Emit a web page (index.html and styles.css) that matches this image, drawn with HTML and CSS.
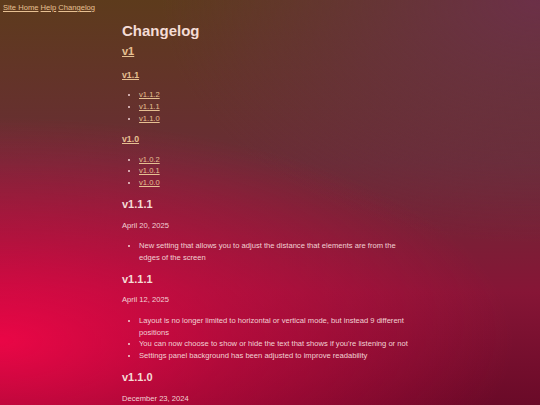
FILE: index.html
```html
<!DOCTYPE html>
<html lang="en">
<head>
<meta charset="utf-8">
<title>Changelog</title>
<link rel="stylesheet" href="styles.css">
</head>
<body>
<nav class="site-nav">
  <a href="#">Site Home</a> <a href="#">Help</a> <a href="#">Changelog</a>
</nav>
<main class="page">
  <h1 class="title">Changelog</h1>
  <h2 class="toc-major"><a href="#">v1</a></h2>
  <h3 class="toc-minor"><a href="#">v1.1</a></h3>
  <ul class="toc-list">
    <li><a href="#">v1.1.2</a></li>
    <li><a href="#">v1.1.1</a></li>
    <li><a href="#">v1.1.0</a></li>
  </ul>
  <h3 class="toc-minor"><a href="#">v1.0</a></h3>
  <ul class="toc-list">
    <li><a href="#">v1.0.2</a></li>
    <li><a href="#">v1.0.1</a></li>
    <li><a href="#">v1.0.0</a></li>
  </ul>

  <section class="release">
    <h2 class="release-title">v1.1.1</h2>
    <p class="release-date">April 20, 2025</p>
    <ul class="release-notes">
      <li>New setting that allows you to adjust the distance that elements are from the edges of the screen</li>
    </ul>
  </section>

  <section class="release">
    <h2 class="release-title">v1.1.1</h2>
    <p class="release-date">April 12, 2025</p>
    <ul class="release-notes">
      <li>Layout is no longer limited to horizontal or vertical mode, but instead 9 different positions</li>
      <li>You can now choose to show or hide the text that shows if you're listening or not</li>
      <li>Settings panel background has been adjusted to improve readability</li>
    </ul>
  </section>

  <section class="release">
    <h2 class="release-title">v1.1.0</h2>
    <p class="release-date">December 23, 2024</p>
  </section>
</main>
</body>
</html>
```

FILE: styles.css
```css
html {
  height: 100%;
  background:
    radial-gradient(ellipse 95% 55% at 0% 84%, rgba(234, 6, 70, 1) 0%, rgba(234, 6, 70, 0.5) 45%, rgba(234, 6, 70, 0) 100%),
    radial-gradient(ellipse 70% 60% at 100% 0%, rgba(108, 48, 72, 1) 0%, rgba(108, 48, 72, 0) 100%),
    linear-gradient(to bottom, #5d3b1c 0%, #6a2c36 40%, #861536 72%, #6a0a28 100%);
}

body {
  margin: 0;
  padding: 4px 3px;
  font-family: "Liberation Sans", Arial, sans-serif;
  font-size: 7.6px;
  color: #f2d2d4;
}

a {
  color: #e6c092;
}

.site-nav {
  line-height: 8.7px;
}

.page {
  max-width: 296px;
  margin: 0 auto;
}

.title {
  font-size: 15px;
  line-height: 17.2px;
  margin: 9.4px 0 5.5px;
  color: #f4dcd6;
}

.toc-major {
  font-size: 11px;
  line-height: 12.6px;
  margin: 0 0 12.4px;
}

.toc-minor {
  font-size: 8.75px;
  line-height: 10px;
  margin: 9.5px 0;
}

.toc-list,
.release-notes {
  margin: 8.6px 0;
  padding-left: 17px;
  line-height: 11.8px;
}

.release-title {
  font-size: 11px;
  line-height: 12.6px;
  margin: 9px 0;
  color: #f4dcd6;
}

.release-date {
  margin: 8.8px 0;
  line-height: 11.7px;
}
```
